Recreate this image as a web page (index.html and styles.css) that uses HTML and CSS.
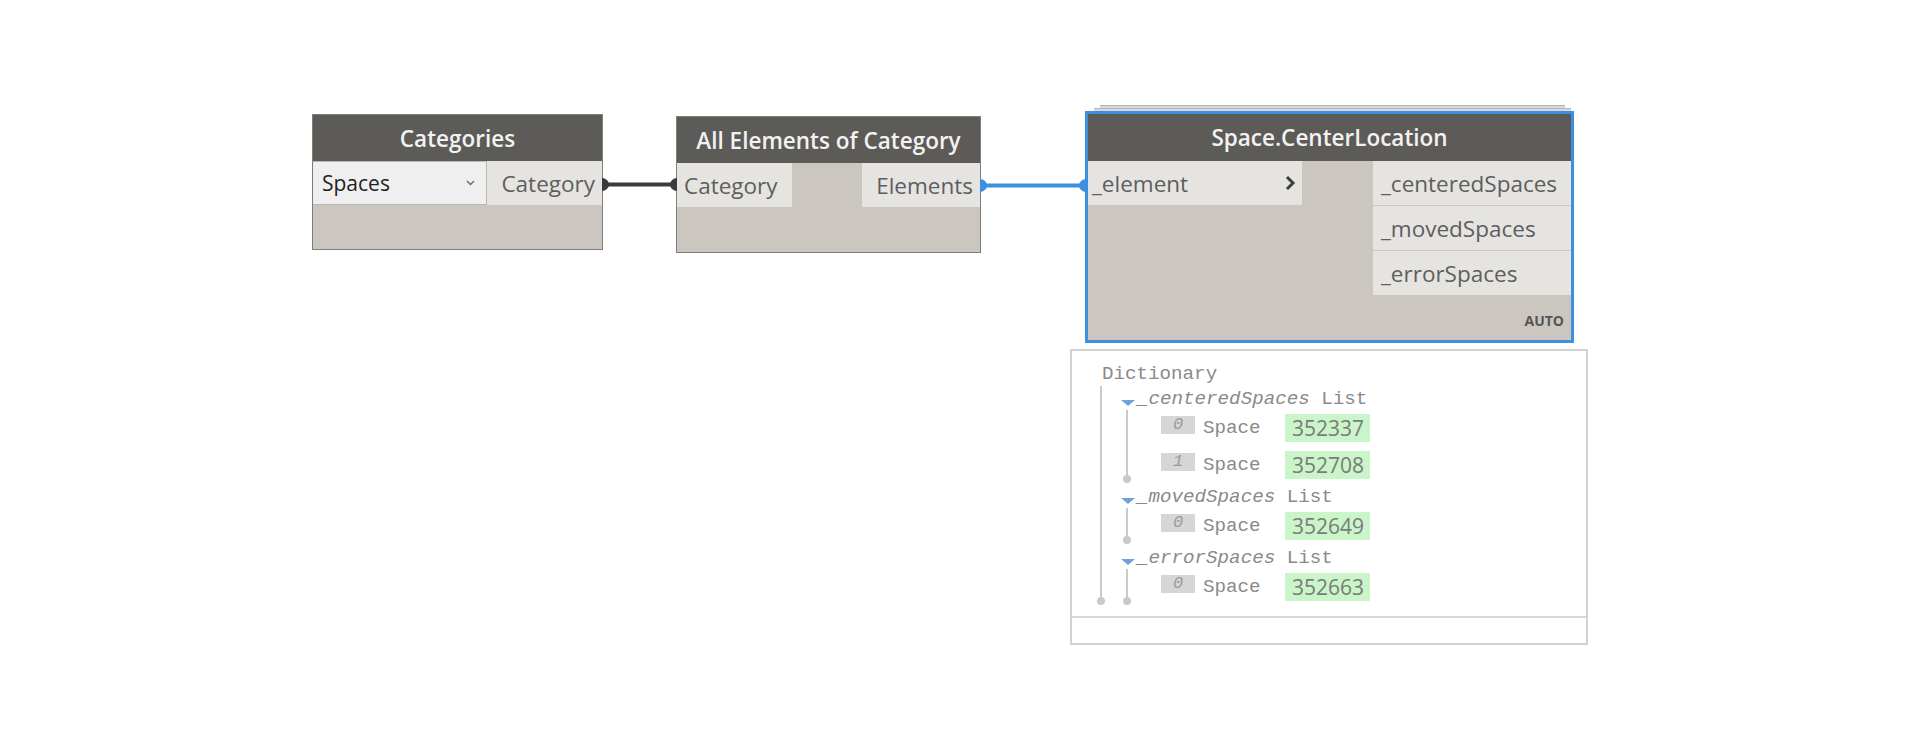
FILE: index.html
```html
<!DOCTYPE html>
<html lang="en">
<head>
    <meta charset="UTF-8">
    <title>Space.CenterLocation graph</title>
    <link rel="stylesheet" href="styles.css">
</head>
<body>
    <div class="canvas">

        <!-- Categories -->
        <div class="node node-categories">
            <div class="node-header">Categories</div>
            <div class="node-ports">
                <div class="dropdown">
                    <span>Spaces</span>
                    <svg class="dropdown-arrow" width="9" height="6" viewBox="0 0 9 6"><polyline points="1,1 4.5,4.5 8,1" /></svg>
                </div>
                <div class="port port-out">Category</div>
            </div>
        </div>

        <!-- All Elements of Category -->
        <div class="node node-elements">
            <div class="node-header">All Elements of Category</div>
            <div class="node-ports split">
                <div class="port port-in">Category</div>
                <div class="port port-out">Elements</div>
            </div>
        </div>

        <!-- Space.CenterLocation, selected -->
        <div class="stack stack-back"></div>
        <div class="stack stack-front"></div>
        <div class="node node-center selected">
            <div class="node-header">Space.CenterLocation</div>
            <div class="node-ports split">
                <div class="inputs">
                    <div class="port port-in port-wide">
                        <span>_element</span>
                        <svg class="lacing" width="12" height="16" viewBox="0 0 12 16"><polyline points="3,2 9,8 3,14" /></svg>
                    </div>
                </div>
                <div class="outputs">
                    <div class="port port-out port-left">_centeredSpaces</div>
                    <div class="port port-out port-left">_movedSpaces</div>
                    <div class="port port-out port-left">_errorSpaces</div>
                </div>
            </div>
            <div class="node-footer">AUTO</div>
        </div>

        <!-- preview bubble -->
        <div class="watch">
            <div class="watch-body">
                <div class="tree-label">Dictionary</div>
                <div class="branch">
                    <div class="group">
                        <div class="key"><span class="caret"></span><em>_centeredSpaces</em> List</div>
                        <div class="items">
                            <div class="item"><span class="index">0</span><span class="type">Space</span><span class="value">352337</span></div>
                            <div class="item"><span class="index">1</span><span class="type">Space</span><span class="value">352708</span></div>
                        </div>
                    </div>
                    <div class="group">
                        <div class="key"><span class="caret"></span><em>_movedSpaces</em> List</div>
                        <div class="items">
                            <div class="item"><span class="index">0</span><span class="type">Space</span><span class="value">352649</span></div>
                        </div>
                    </div>
                    <div class="group">
                        <div class="key"><span class="caret"></span><em>_errorSpaces</em> List</div>
                        <div class="items">
                            <div class="item"><span class="index">0</span><span class="type">Space</span><span class="value">352663</span></div>
                        </div>
                    </div>
                </div>
            </div>
            <div class="watch-footer"></div>
        </div>

        <!-- connectors -->
        <svg class="wires" width="1920" height="744" viewBox="0 0 1920 744">
            <g class="wire-dark">
                <line x1="604" y1="184.5" x2="674" y2="184.5" />
                <path d="M602,178 a7,6.5 0 0 1 0,13 z" />
                <path d="M677,178 a7,6.5 0 0 0 0,13 z" />
            </g>
            <g class="wire-blue">
                <line x1="982" y1="185.5" x2="1084" y2="185.5" />
                <path d="M980,179 a7,6.5 0 0 1 0,13 z" />
                <path d="M1086,179 a7,6.5 0 0 0 0,13 z" />
            </g>
        </svg>
    </div>
</body>
</html>
```

FILE: styles.css
```css
body {
    margin: 0;
    background: #ffffff;
    font-family: "Open Sans", "Noto Sans", sans-serif;
}
.canvas {
    position: relative;
    width: 1920px;
    height: 744px;
    overflow: hidden;
}

/* nodes */
.node {
    position: absolute;
    box-sizing: border-box;
    display: flex;
    flex-direction: column;
    background: #cbc7c0;
    border: 1px solid #7f7d7a;
}
.node-header {
    height: 46px;
    flex: none;
    display: flex;
    align-items: center;
    justify-content: center;
    background: #5d5b58;
    color: #f2f2f2;
    font-size: 22.5px;
    font-weight: 600;
}
.node-ports {
    display: flex;
    justify-content: space-between;
}
.port {
    height: 44px;
    box-sizing: border-box;
    display: flex;
    align-items: center;
    background: #e5e4e1;
    color: #5e5e5e;
    font-size: 22.5px;
    padding: 0 7px;
}
.port-out {
    justify-content: flex-end;
}
.node-categories {
    left: 312px;
    top: 114px;
    width: 291px;
    height: 136px;
}
.node-categories .port-out {
    flex: 1;
}
.dropdown {
    width: 174px;
    height: 44px;
    box-sizing: border-box;
    display: flex;
    align-items: center;
    justify-content: space-between;
    padding: 0 11px 0 9px;
    background: #efefef;
    border: 1px solid #b9b9b9;
    border-left: none;
    color: #1e1e1e;
    font-size: 21px;
}
.dropdown-arrow polyline {
    fill: none;
    stroke: #6a6a6a;
    stroke-width: 1.4;
}
.node-elements {
    left: 676px;
    top: 116px;
    width: 305px;
    height: 137px;
}
.node-elements .port-in {
    width: 115px;
}
.node-elements .port-out {
    width: 118px;
}

/* selected node */
.node-center {
    left: 1085px;
    top: 111px;
    width: 489px;
    height: 232px;
    border: 3px solid #3d8fe0;
}
.node-center .node-header {
    height: 47px;
}
.inputs, .outputs {
    display: flex;
    flex-direction: column;
    gap: 1px;
}
.port-wide {
    width: 214px;
    justify-content: space-between;
    padding: 0 6px 0 4px;
}
.lacing polyline {
    fill: none;
    stroke: #3f3f3f;
    stroke-width: 3;
}
.outputs .port {
    width: 198px;
    height: 44px;
    padding: 0 8px;
}
.port-left {
    justify-content: flex-start;
}
.node-footer {
    margin-top: auto;
    padding: 0 7px 10px 0;
    text-align: right;
    font-size: 14px;
    font-weight: 700;
    color: #555;
}
.stack {
    position: absolute;
    height: 3px;
    background: #d9d9d9;
    border-top: 1px solid #b5b5b5;
}
.stack-back {
    left: 1100px;
    top: 105px;
    width: 465px;
}
.stack-front {
    left: 1094px;
    top: 108px;
    width: 477px;
}

/* wires */
.wires {
    position: absolute;
    left: 0;
    top: 0;
    pointer-events: none;
}
.wire-dark line {
    stroke: #3b3b3b;
    stroke-width: 4;
}
.wire-dark path {
    fill: #3b3b3b;
}
.wire-blue line {
    stroke: #3d8fe0;
    stroke-width: 4;
}
.wire-blue path {
    fill: #3d8fe0;
}

/* watch bubble */
.watch {
    position: absolute;
    left: 1070px;
    top: 349px;
    width: 518px;
    box-sizing: border-box;
    border: 2px solid #d2d2d2;
    background: #fff;
    font-family: "Liberation Mono", "DejaVu Sans Mono", monospace;
    font-size: 19.2px;
    color: #8a8a8a;
}
.watch-body {
    height: 267px;
    box-sizing: border-box;
    padding: 11px 0 0 30px;
    border-bottom: 2px solid #d8d8d8;
}
.watch-footer {
    height: 25px;
}
.tree-label {
    height: 24px;
    line-height: 24px;
}
.branch, .items {
    position: relative;
}
.branch::before, .items::before {
    content: "";
    position: absolute;
    left: 0;
    width: 2px;
    background: #c9c9c9;
}
.branch::after, .items::after {
    content: "";
    position: absolute;
    left: -3px;
    bottom: 0;
    width: 8px;
    height: 8px;
    border-radius: 50%;
    background: #c9c9c9;
}
.branch {
    margin-left: -2px;
    padding: 2px 0 0 21px;
}
.branch::before {
    top: 0;
    bottom: 4px;
}
.group + .group {
    margin-top: 3px;
}
.key {
    height: 22px;
    line-height: 22px;
    display: flex;
    align-items: center;
    white-space: pre;
}
.key em {
    font-style: italic;
}
.caret {
    width: 0;
    height: 0;
    margin: 8px 2px 0 0;
    border-left: 7px solid transparent;
    border-right: 7px solid transparent;
    border-top: 6px solid #6fa3d8;
}
.items {
    margin-left: 5px;
    padding: 4px 0 4px 35px;
    display: flex;
    flex-direction: column;
    gap: 9px;
}
.items::before {
    top: 0;
    bottom: 4px;
}
.item {
    height: 28px;
    display: flex;
    align-items: center;
}
.index {
    width: 34px;
    height: 18px;
    line-height: 18px;
    margin-top: -6px;
    background: #d6d6d6;
    color: #9a9a9a;
    font-style: italic;
    font-size: 17px;
    text-align: center;
}
.type {
    margin-left: 8px;
    width: 82px;
}
.value {
    height: 28px;
    line-height: 28px;
    padding: 0 6px 0 7px;
    background: #c9f5c9;
    color: #7b7b7b;
    font-family: "Open Sans", "Noto Sans", sans-serif;
    font-size: 21px;
}
```
